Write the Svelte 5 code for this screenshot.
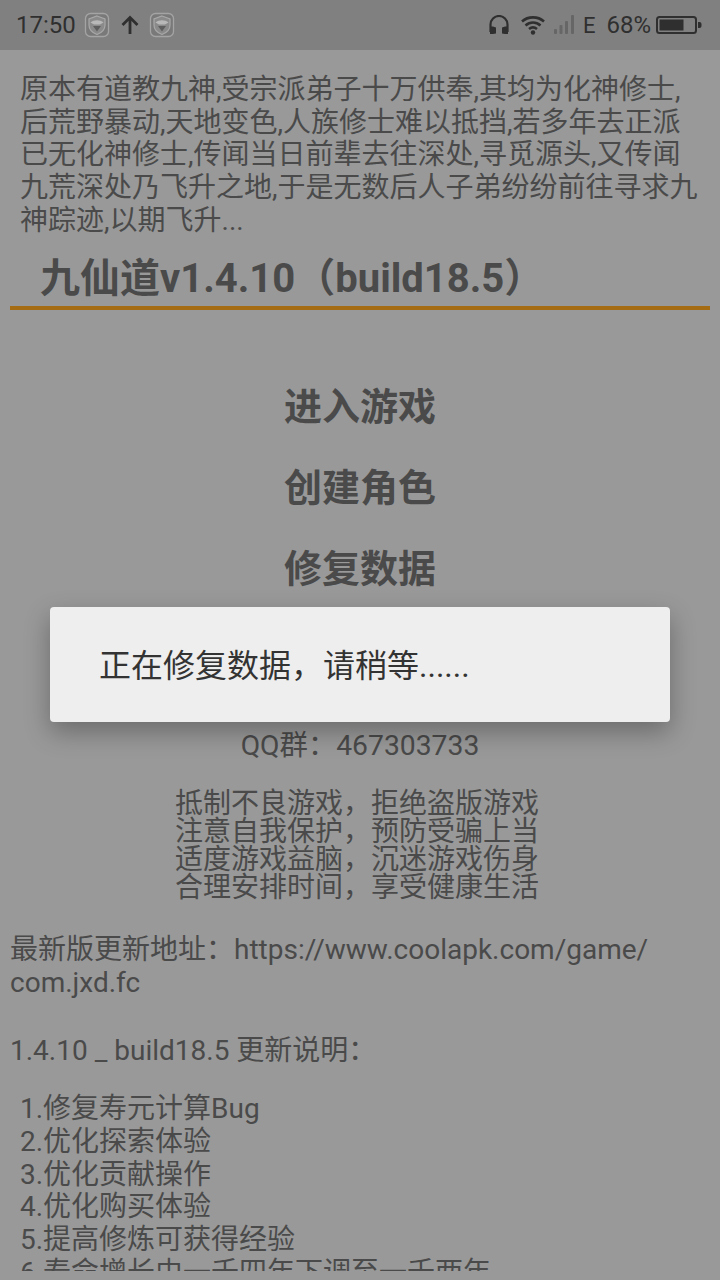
<script>
  const tips = ['抵制不良游戏，拒绝盗版游戏', '注意自我保护，预防受骗上当', '适度游戏益脑，沉迷游戏伤身', '合理安排时间，享受健康生活'];
  const notes = ['1.修复寿元计算Bug', '2.优化探索体验', '3.优化贡献操作', '4.优化购买体验', '5.提高修炼可获得经验', '6.寿命增长由一千四年下调至一千两年'];
  const menu = ['进入游戏', '创建角色', '修复数据'];
</script>

{#snippet shield()}
  <svg class="shield" width="26" height="26" viewBox="0 0 26 26">
    <rect x="1.500" y="1.500" width="23" height="23" rx="5" fill="#797979" stroke="#a4a4a4" stroke-width="1.300"/>
    <path d="M13 4 L21 7 V13 C21 18 17 21 13 22.500 C9 21 5 18 5 13 V7 Z" fill="#8a8a8a" stroke="#a8a8a8" stroke-width="1.200"/>
    <path d="M6.500 10.500 C10 7.500 16 7.500 19.500 10.500 L16 12.500 H10 Z" fill="#b8b8b8"/>
    <path d="M9 14 H17 L13 19.500 Z" fill="#5e5e5e"/>
  </svg>
{/snippet}

<div class="screen">
  <header class="status">
    <div class="left">
      <span class="time">17:50</span>
      {@render shield()}
      <svg class="up" width="18" height="20" viewBox="0 0 18 20"><path d="M9 19 V3 M1.500 10 L9 2.500 L16.500 10" fill="none" stroke="#2f2f2f" stroke-width="2.800"/></svg>
      {@render shield()}
    </div>
    <div class="right">
      <svg width="20" height="20" viewBox="0 0 20 20"><path d="M1.500 17 V9.500 a8.500 8.500 0 0 1 17 0 V17" fill="none" stroke="#2f2f2f" stroke-width="2.200"/><path d="M1 11.500 h3 l3 1 V18.500 l-3 0.500 H1 Z M19 11.500 h-3 l-3 1 V18.500 l3 0.500 h3 Z" fill="#2f2f2f"/></svg>
      <svg class="wifi" width="24" height="20" viewBox="0 0 24 20"><g fill="none" stroke="#2f2f2f" stroke-width="2.600"><path d="M1 6.500 C7 1 17 1 23 6.500"/><path d="M4.500 10.500 C9 6.500 15 6.500 19.500 10.500"/><path d="M8 14 C10.500 12 13.500 12 16 14"/></g><circle cx="12" cy="17.500" r="2.200" fill="#2f2f2f"/></svg>
      <svg class="signal" width="24" height="22" viewBox="0 0 24 22"><g fill="#666"><rect x="1" y="15" width="3" height="5" rx="1"/><rect x="6.500" y="11" width="3" height="9" rx="1"/><rect x="12" y="7" width="3" height="13" rx="1"/><rect x="18" y="1" width="3" height="19" rx="1"/></g></svg>
      <span class="net">E</span>
      <span class="pct">68%</span>
      <svg class="bat" width="46" height="20" viewBox="0 0 46 20"><rect x="1" y="2" width="39" height="16" rx="2.500" fill="none" stroke="#2f2f2f" stroke-width="2"/><rect x="3.500" y="4.500" width="24" height="11" fill="#2f2f2f"/><path d="M42 7 h1.500 a2 2 0 0 1 2 2 v2 a2 2 0 0 1 -2 2 H42 Z" fill="#2f2f2f"/></svg>
    </div>
  </header>

  <main class="page">
    <p class="intro">原本有道教九神,受宗派弟子十万供奉,其均为化神修士,后荒野暴动,天地变色,人族修士难以抵挡,若多年去正派已无化神修士,传闻当日前辈去往深处,寻觅源头,又传闻九荒深处乃飞升之地,于是无数后人子弟纷纷前往寻求九神踪迹,以期飞升...</p>
    <h1 class="title">九仙道v1.4.10（build18.5）</h1>
    <nav class="menu">
      {#each menu as item}
        <div class="item">{item}</div>
      {/each}
    </nav>
    <div class="qq">QQ群：467303733</div>
    <div class="tips">
      {#each tips as t}<div>{t}</div>{/each}
    </div>
    <p class="link">最新版更新地址：https://www.coolapk.com/game/<br />com.jxd.fc</p>
    <p class="ver">1.4.10 _ build18.5 更新说明：</p>
    <ul class="notes">
      {#each notes as n}<li>{n}</li>{/each}
    </ul>
  </main>

  <div class="dialog">正在修复数据，请稍等......</div>
</div>

<style>
  :global(body) {
    margin: 0;
    background: #999;
  }
  .screen {
    position: relative;
    width: 720px;
    height: 1280px;
    overflow: hidden;
    background: #999;
    color: #4a4a4a;
    font-family: Roboto, "Noto Sans CJK SC", sans-serif;
  }
  .status {
    height: 50px;
    background: #808080;
    display: flex;
    align-items: center;
    justify-content: space-between;
    padding: 0 18px 0 16px;
    box-sizing: border-box;
    color: #2f2f2f;
  }
  .left, .right {
    display: flex;
    align-items: center;
  }
  .time {
    font-size: 24px;
    margin-right: 8px;
  }
  .up {
    margin: 0 10px 0 11px;
  }
  .wifi {
    margin-left: 12px;
  }
  .signal {
    margin-left: 8px;
  }
  .net {
    font-size: 22px;
    margin-left: 6px;
  }
  .pct {
    font-size: 24px;
    margin-left: 11px;
  }
  .bat {
    margin-left: 5px;
  }
  .page {
    height: 1221px;
    overflow: hidden;
    padding: 0 10px;
    box-sizing: border-box;
  }
  p {
    margin: 0;
  }
  .intro {
    padding: 24px 10px 0;
    font-size: 28px;
    line-height: 32.67px;
  }
  .title {
    margin: 17px 0 0;
    padding: 0 30px 2px;
    font-size: 40px;
    line-height: 50px;
    font-weight: 700;
    border-bottom: 4px solid #a56c14;
  }
  .menu {
    padding-top: 57px;
    text-align: center;
  }
  .item {
    font-size: 38px;
    font-weight: 700;
    line-height: 81px;
  }
  .qq {
    margin-top: 120px;
    text-align: center;
    font-size: 28.300px;
    line-height: 32px;
  }
  .tips {
    margin-top: 28px;
    padding-right: 6px;
    text-align: center;
    font-size: 28px;
    line-height: 28px;
  }
  .link {
    margin-top: 32px;
    font-size: 28px;
    line-height: 32.67px;
  }
  .ver {
    margin-top: 35px;
    font-size: 28px;
    line-height: 32.67px;
  }
  .notes {
    list-style: none;
    margin: 26px 0 0;
    padding: 0 10px;
    font-size: 28px;
    line-height: 32.67px;
    white-space: nowrap;
  }
  .dialog {
    position: absolute;
    left: 50px;
    top: 607px;
    width: 620px;
    height: 115px;
    box-sizing: border-box;
    padding: 0 0 4px 49px;
    display: flex;
    align-items: center;
    background: #eeeeee;
    border-radius: 4px;
    color: #333;
    font-size: 32px;
    box-shadow: 0 10px 26px rgba(0, 0, 0, 0.3);
  }
</style>
